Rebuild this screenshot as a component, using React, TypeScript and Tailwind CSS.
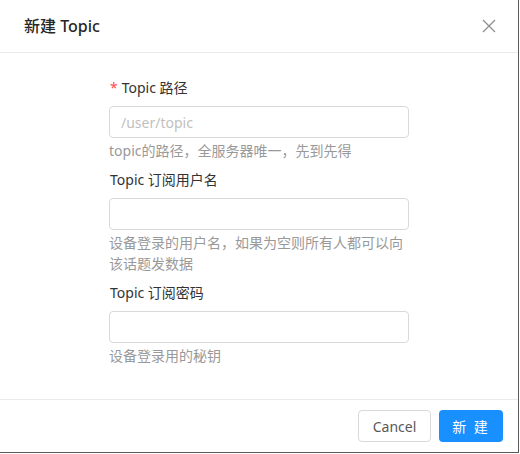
const font = { fontFamily: '"Noto Sans", "Noto Sans CJK SC", sans-serif' };

function FormItem({
  label,
  required,
  placeholder,
  help,
  className,
}: {
  label: string;
  required?: boolean;
  placeholder?: string;
  help: string;
  className?: string;
}) {
  return (
    <div className={`flex flex-col ${className ?? ""}`}>
      <label className="text-[14px] leading-[22px] text-[#333333] pl-px pb-[7px]">
        {required && <span className="text-[#ff4d4f] mr-1">*</span>}
        {label}
      </label>
      <input
        type="text"
        placeholder={placeholder}
        className="h-8 w-full rounded border border-[#d9d9d9] bg-white px-[11px] text-[14px] text-[#262626] placeholder-[#bfbfbf] outline-none"
      />
      <p className="text-[14px] leading-[21px] text-[#999999] pt-[2px]">{help}</p>
    </div>
  );
}

export default function App() {
  return (
    <div className="w-[520px] h-[454px] bg-white" style={font}>
      <div className="w-[519px] h-[453px] border-r border-b border-[#5a5a5a] flex flex-col bg-white">
        {/* Header */}
        <div className="h-[53px] shrink-0 flex items-center justify-between pl-6 pr-[18px] border-b border-[#ebebeb]">
          <span className="text-[16px] font-medium text-[#262626]">新建 Topic</span>
          <button className="p-1 text-[#8c8c8c]">
            <svg width="14" height="14" viewBox="0 0 14 14" fill="none" stroke="currentColor" strokeWidth="1.2">
              <path d="M1 1 L13 13 M13 1 L1 13" />
            </svg>
          </button>
        </div>

        {/* Body */}
        <div className="flex-1 flex justify-center pt-6">
          <div className="w-[300px] flex flex-col">
            <FormItem label="Topic 路径" required placeholder="/user/topic" help="topic的路径，全服务器唯一，先到先得" />
            <FormItem className="mt-[8px]" label="Topic 订阅用户名" help="设备登录的用户名，如果为空则所有人都可以向该话题发数据" />
            <FormItem className="mt-[8px]" label="Topic 订阅密码" help="设备登录用的秘钥" />
          </div>
        </div>

        {/* Footer */}
        <div className="h-[53px] shrink-0 border-t border-[#ebebeb] flex items-center justify-end gap-2 pr-[15px]">
          <button className="h-8 w-[73px] rounded border border-[#d9d9d9] bg-white text-[14px] text-[#595959]">Cancel</button>
          <button className="h-8 w-[64px] rounded bg-[#1890ff] text-[14px] text-white tracking-[2px]">新 建</button>
        </div>
      </div>
    </div>
  );
}
